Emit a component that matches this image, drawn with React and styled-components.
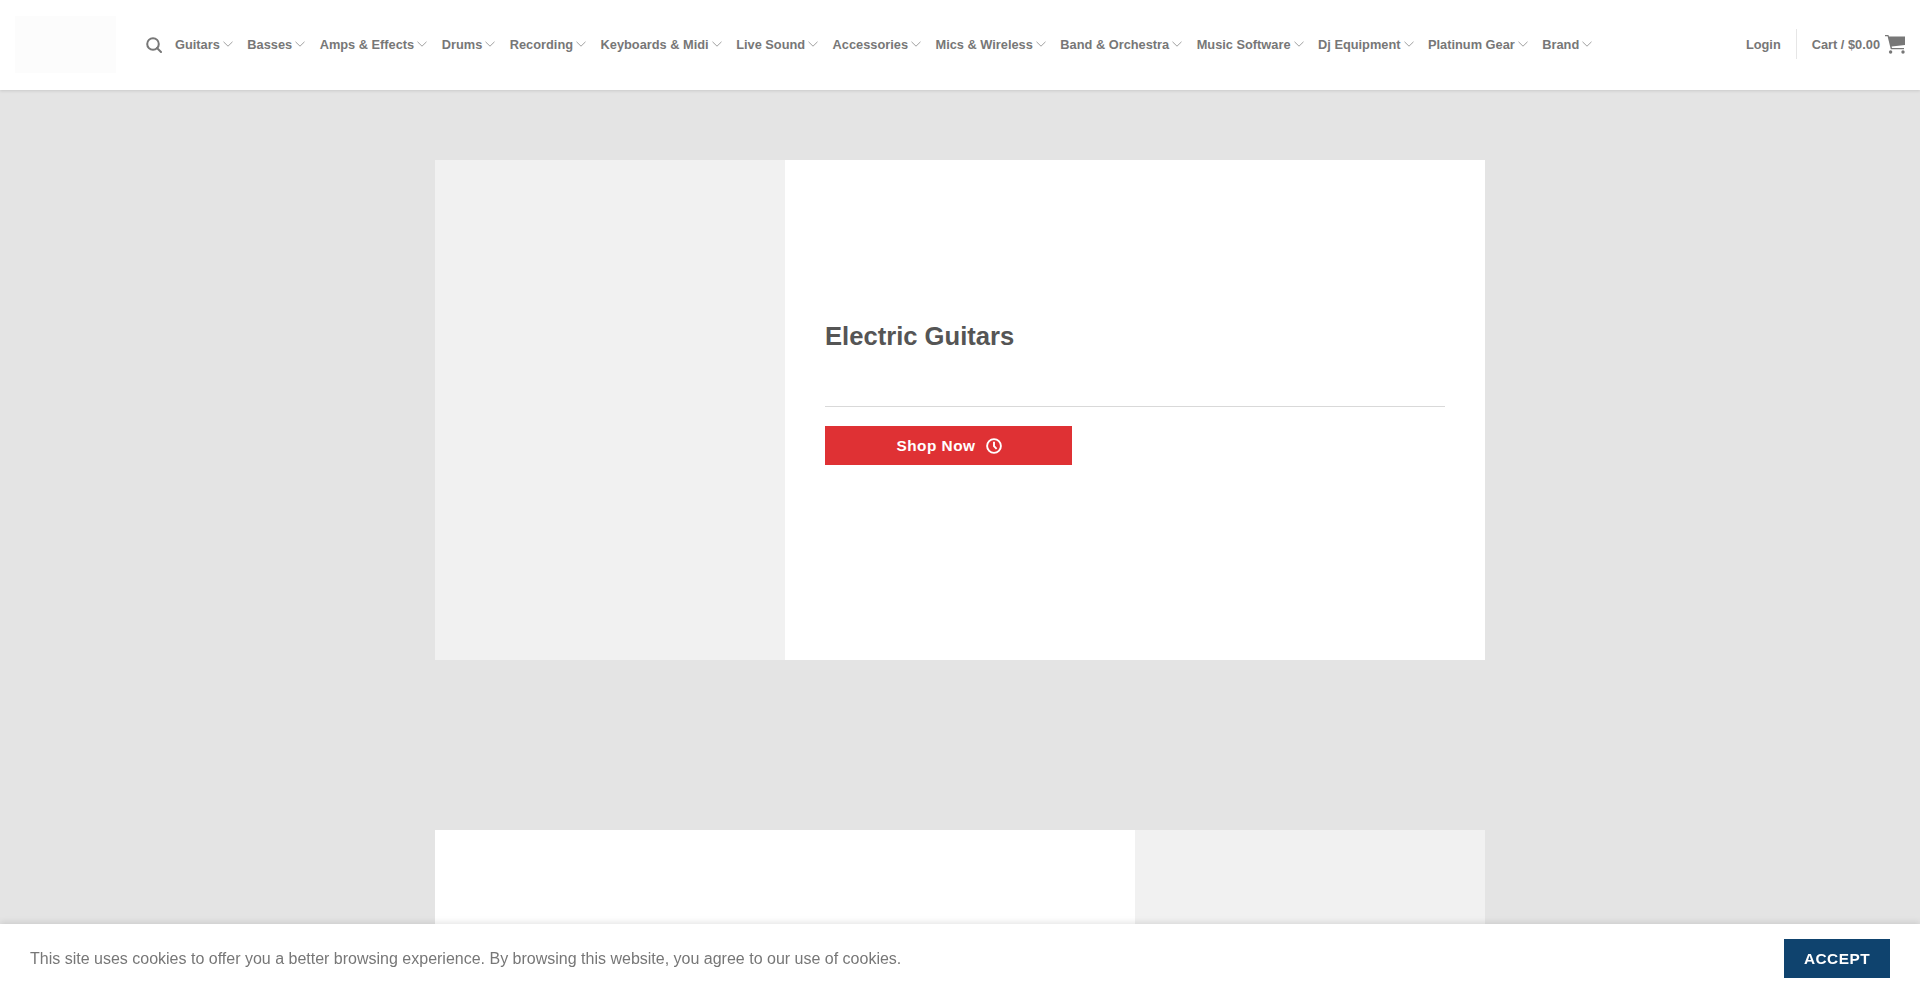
import styled, { createGlobalStyle } from "styled-components";

const navItems = [
  "Guitars",
  "Basses",
  "Amps & Effects",
  "Drums",
  "Recording",
  "Keyboards & Midi",
  "Live Sound",
  "Accessories",
  "Mics & Wireless",
  "Band & Orchestra",
  "Music Software",
  "Dj Equipment",
  "Platinum Gear",
  "Brand",
];

const Chevron = () => (
  <ChevronIcon viewBox="0 0 10 6" fill="none" stroke="currentColor" strokeWidth="1">
    <path d="M0.5 0.8 L5 5.2 L9.5 0.8" />
  </ChevronIcon>
);

const Cart = () => (
  <CartIcon viewBox="0 0 20 19" fill="currentColor">
    <path d="M0 0 H3.4 L4 1.4 H20 V10 L6.6 11.6 L7 13 H19 V14.2 H5.8 L2.6 1.2 H0 Z" />
    <circle cx="5.6" cy="17" r="1.7" />
    <circle cx="18" cy="17" r="1.7" />
  </CartIcon>
);

const App = () => {
  return (
    <Page>
      <GlobalStyle />
      <Header>
        <Logo />
        <SearchIcon viewBox="0 0 16 16" fill="none" stroke="currentColor" strokeWidth="2">
          <circle cx="7" cy="7" r="5.8" />
          <path d="M11 11 L15 15" strokeLinecap="round" />
        </SearchIcon>
        <Nav>
          {navItems.map((item) => (
            <NavItem key={item}>
              {item}
              <Chevron />
            </NavItem>
          ))}
        </Nav>
        <Account>
          <NavItem>Login</NavItem>
          <Divider />
          <NavItem>
            Cart / $0.00
            <Cart />
          </NavItem>
        </Account>
      </Header>
      <Main>
        <Card>
          <ImagePane />
          <TextPane>
            <Title>Electric Guitars</Title>
            <Rule />
            <ShopButton>
              Shop Now
              <ClockIcon viewBox="0 0 16 16" fill="none" stroke="currentColor" strokeWidth="1.9">
                <circle cx="8" cy="8" r="6.9" />
                <path d="M8 3.8 V8.2 L10.6 10.8" />
              </ClockIcon>
            </ShopButton>
          </TextPane>
        </Card>
        <Card $reverse>
          <ImagePane />
          <TextPane />
        </Card>
      </Main>
      <CookieBar>
        <CookieText>
          This site uses cookies to offer you a better browsing experience. By browsing this
          website, you agree to our use of cookies.
        </CookieText>
        <AcceptButton>ACCEPT</AcceptButton>
      </CookieBar>
    </Page>
  );
};

const GlobalStyle = createGlobalStyle`
  html, body {
    margin: 0;
    padding: 0;
    height: 100%;
    overflow: hidden;
  }
  * {
    box-sizing: border-box;
  }
`;

const Page = styled.div`
  height: 100vh;
  overflow: hidden;
  background-color: #e4e4e4;
  font-family: "Liberation Sans", Arial, sans-serif;
`;

const Header = styled.header`
  display: flex;
  align-items: center;
  height: 90px;
  padding: 0 15px;
  background-color: #fff;
  box-shadow: 0 1px 3px rgba(0, 0, 0, 0.12);
  position: relative;
`;

const Logo = styled.div`
  width: 101px;
  height: 57px;
  margin-bottom: 1px;
  background-color: #fcfcfc;
`;

const SearchIcon = styled.svg`
  width: 16px;
  height: 16px;
  margin: 0 0 1px 30px;
  color: #777;
`;

const Nav = styled.nav`
  display: flex;
  align-items: center;
  gap: 14.5px;
  margin-left: 13px;
  flex: 1;
`;

const NavItem = styled.a`
  display: flex;
  align-items: center;
  padding-bottom: 2px;
  font-size: 12.8px;
  font-weight: 700;
  color: #777;
  white-space: nowrap;
`;

const ChevronIcon = styled.svg`
  width: 10px;
  height: 6px;
  margin-left: 3px;
  color: #a0a0a0;
`;

const Account = styled.div`
  display: flex;
  align-items: center;
  gap: 15px;
`;

const Divider = styled.span`
  width: 1px;
  height: 30px;
  margin-bottom: 2px;
  background-color: #e6e6e6;
`;

const CartIcon = styled.svg`
  width: 20px;
  height: 19px;
  margin-left: 5px;
  color: #777;
`;

const Main = styled.main`
  display: flex;
  flex-direction: column;
  align-items: center;
  gap: 170px;
  padding-top: 70px;
`;

const Card = styled.section`
  display: flex;
  flex-direction: ${(props) => (props.$reverse ? "row-reverse" : "row")};
  flex-shrink: 0;
  width: 1050px;
  height: 500px;
  background-color: #fff;
`;

const ImagePane = styled.div`
  width: 350px;
  background-color: #f1f1f1;
`;

const TextPane = styled.div`
  flex: 1;
  padding: 160px 40px 0;
`;

const Title = styled.h2`
  margin: 0;
  font-size: 25.6px;
  line-height: 32px;
  font-weight: 700;
  color: #555;
`;

const Rule = styled.hr`
  height: 1px;
  margin: 53.5px 0 19.5px;
  border: 0;
  background-color: #d9d9d9;
`;

const ShopButton = styled.button`
  display: flex;
  align-items: center;
  justify-content: center;
  gap: 10px;
  width: 247px;
  height: 39px;
  padding: 0 0 0 1px;
  border: 0;
  background-color: #df3134;
  color: #fff;
  font-family: inherit;
  font-size: 15.36px;
  font-weight: 700;
  letter-spacing: 0.5px;
`;

const ClockIcon = styled.svg`
  width: 16px;
  height: 16px;
`;

const CookieBar = styled.div`
  position: fixed;
  left: 0;
  right: 0;
  bottom: 0;
  display: flex;
  align-items: center;
  justify-content: space-between;
  height: 69px;
  padding: 0 30px;
  background-color: #fff;
  box-shadow: 0 -2px 6px rgba(0, 0, 0, 0.1);
`;

const CookieText = styled.p`
  margin: 0;
  font-size: 16px;
  color: #777;
`;

const AcceptButton = styled.button`
  width: 106px;
  height: 39px;
  padding: 0;
  border: 0;
  background-color: #0f436e;
  color: #fff;
  font-family: inherit;
  font-size: 15.36px;
  font-weight: 700;
  letter-spacing: 0.5px;
`;

export default App;
